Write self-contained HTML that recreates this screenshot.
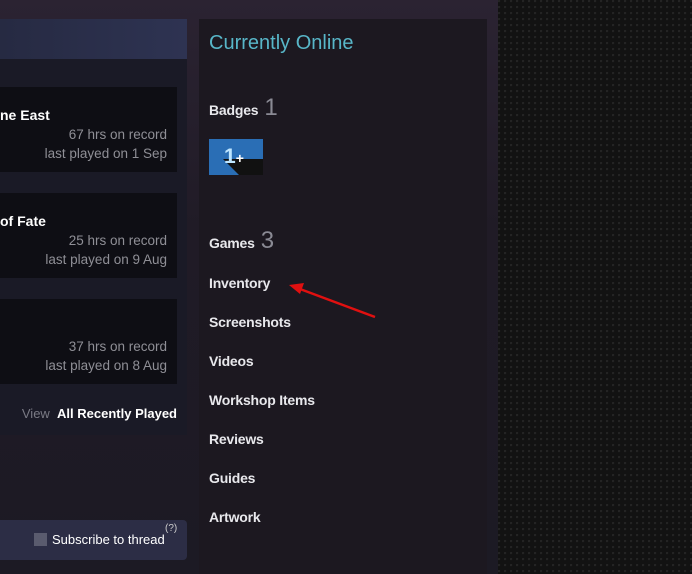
<!DOCTYPE html>
<html><head><style>
body{margin:0;width:692px;height:574px;overflow:hidden;background:#221c26;font-family:"Liberation Sans",sans-serif;position:relative}
.bgR{position:absolute;left:498px;top:0;width:194px;height:574px;background:radial-gradient(circle at 1px 1px,#242424 1px,transparent 1.5px) 0 0/6px 6px,#121212}
.bgM{position:absolute;left:0;top:0;width:498px;height:574px;background:linear-gradient(180deg,#2b2332 0%,#201b26 40%,#1c1a24 100%)}
.left{position:absolute;left:0;top:19px;width:187px;height:416px;background:#1a1a26}
.lh{position:absolute;left:0;top:19px;width:187px;height:40px;background:linear-gradient(90deg,#262a42,#2e3352)}
.card{position:absolute;left:0;width:177px;height:85px;background:#0e0e14}
.t{position:absolute;color:#fff;font-size:14px;font-weight:bold}
.g{position:absolute;right:10px;color:#8f8f96;font-size:13.5px;text-align:right}
.right{position:absolute;left:199px;top:19px;width:288px;height:555px;background:#1c1820}
.lk{position:absolute;left:209px;color:#e8e8ec;font-size:14px;font-weight:bold;letter-spacing:-0.2px}
.n{color:#8a8a94;font-size:24px;font-weight:normal;margin-left:6px}
.sub{position:absolute;left:0;top:520px;width:187px;height:40px;background:#2c2d45;border-radius:0 4px 4px 0}
</style></head><body>
<div class="bgM"></div><div class="bgR"></div>
<div class="left"></div><div class="lh"></div>
<div class="card" style="top:87px"><div class="t" style="left:0;top:20px">ne East</div><div class="g" style="top:40px">67 hrs on record</div><div class="g" style="top:59px">last played on 1 Sep</div></div>
<div class="card" style="top:193px"><div class="t" style="left:0;top:20px">of Fate</div><div class="g" style="top:40px">25 hrs on record</div><div class="g" style="top:59px">last played on 9 Aug</div></div>
<div class="card" style="top:299px"><div class="g" style="top:40px">37 hrs on record</div><div class="g" style="top:59px">last played on 8 Aug</div></div>
<div style="position:absolute;right:515px;top:406px;font-size:13px;color:#7a7a84">View &nbsp;<span style="color:#fff;font-weight:bold">All Recently Played</span></div>
<div class="sub"><div style="position:absolute;left:34px;top:13px;width:13px;height:13px;background:#5a5b6e"></div><div style="position:absolute;left:52px;top:12px;color:#fff;font-size:13px">Subscribe to thread</div><div style="position:absolute;left:165px;top:3px;color:#ccc;font-size:10px">(?)</div></div>
<div class="right"></div>
<div style="position:absolute;left:209px;top:32px;color:#58b6c8;font-size:20px">Currently Online</div>
<div class="lk" style="top:94px">Badges<span class="n">1</span></div>
<div style="position:absolute;left:209px;top:139px;width:54px;height:36px;background:#2a6eb5;overflow:hidden"><div style="position:absolute;left:14px;top:20px;width:40px;height:30px;background:#111;transform:skewX(45deg);transform-origin:0 0"></div><div style="position:absolute;left:15px;top:6px;color:#bfe6ff;font-size:21px;font-weight:bold">1<span style="font-size:14px;color:#fff">+</span></div></div>
<div class="lk" style="top:227px">Games<span class="n">3</span></div>
<div class="lk" style="top:275px">Inventory</div>
<div class="lk" style="top:314px">Screenshots</div>
<div class="lk" style="top:353px">Videos</div>
<div class="lk" style="top:392px">Workshop Items</div>
<div class="lk" style="top:431px">Reviews</div>
<div class="lk" style="top:470px">Guides</div>
<div class="lk" style="top:509px">Artwork</div>
<svg style="position:absolute;left:0;top:0" width="692" height="574"><line x1="375" y1="317" x2="300" y2="289" stroke="#e01010" stroke-width="2.5"/><polygon points="289,285 304,283 300,294" fill="#e01010"/></svg>
</body></html>
